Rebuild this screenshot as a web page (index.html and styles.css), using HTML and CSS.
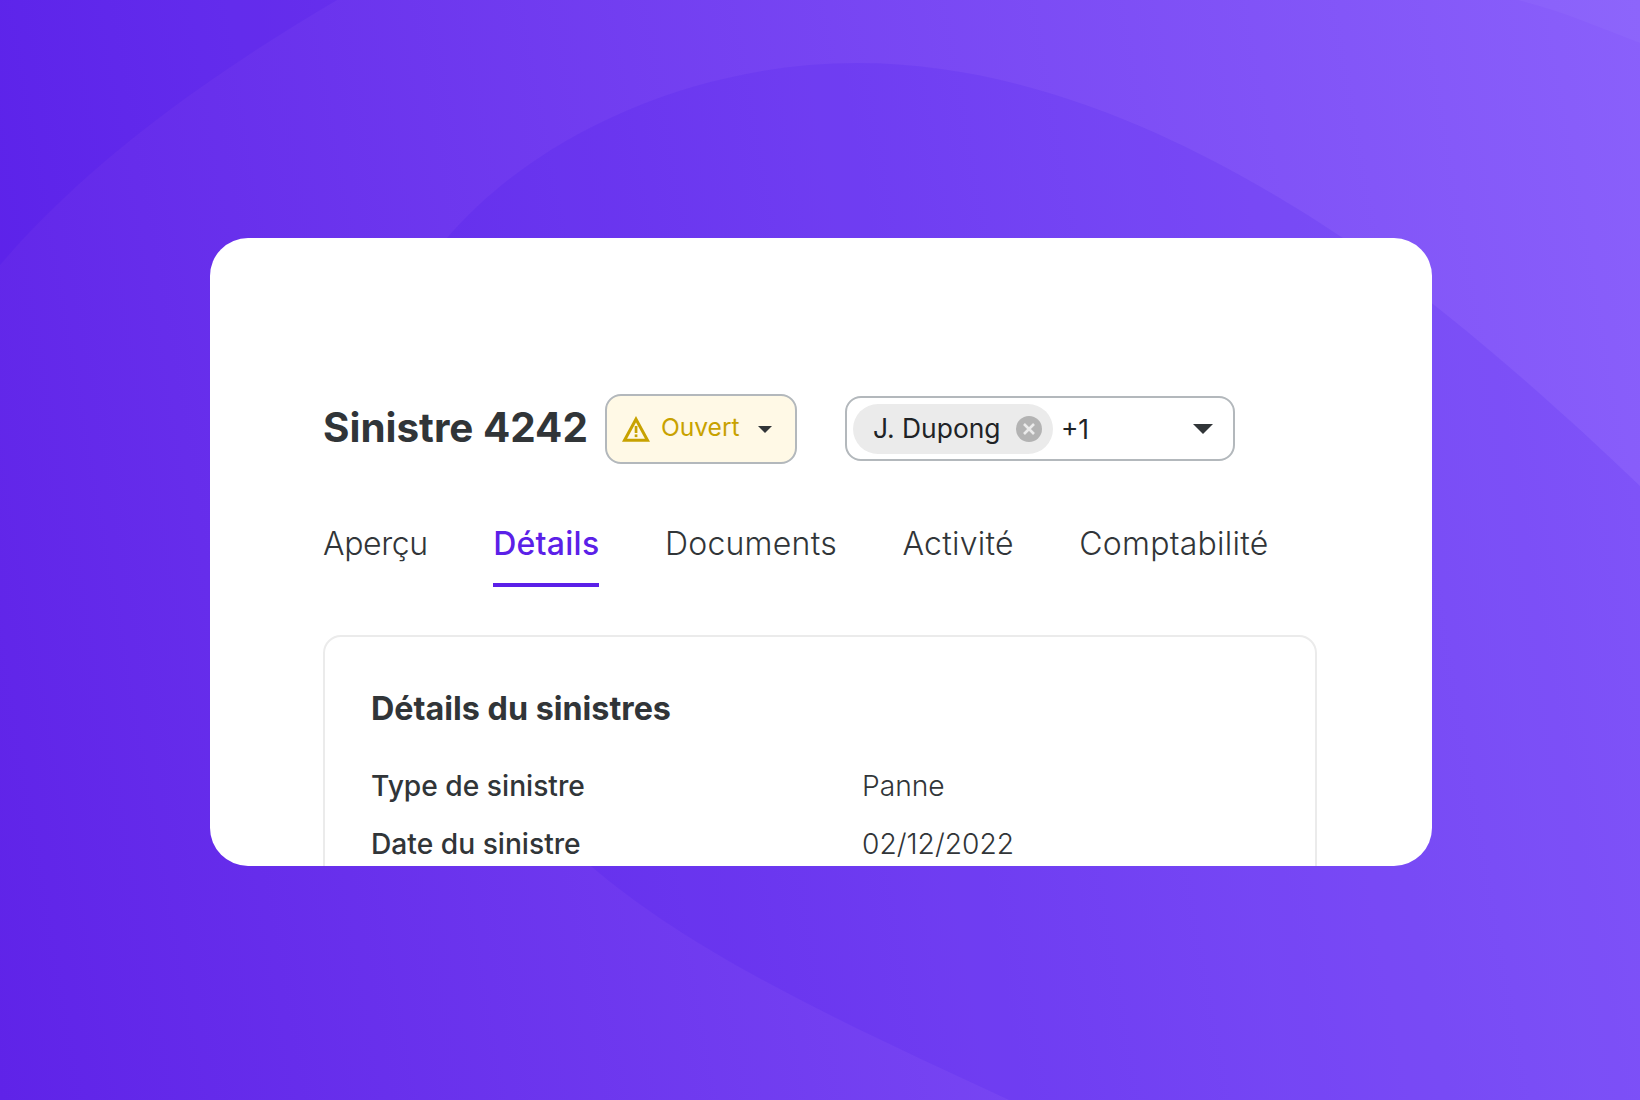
FILE: index.html
```html
<!DOCTYPE html>
<html lang="fr">
<head>
    <meta charset="UTF-8">
    <title>Sinistre 4242</title>
    <link rel="stylesheet" href="styles.css">
</head>
<body>
    <div class="page">
        <!-- Background shapes -->
        <svg class="bg-shapes" width="1640" height="1100" viewBox="0 0 1640 1100">
            <path class="shape-dark" d="M0 0H337C210 75 90 160 0 265Z"/>
            <path class="shape-dark" d="M1009 1100C870 1035 700 960 591 866C380 690 330 420 447 238C540 130 700 63 857 63C1060 63 1240 170 1343 238C1440 303 1550 400 1640 486V1100Z"/>
            <path class="shape-light" d="M1517 0C1560 10 1600 28 1640 43V0Z"/>
        </svg>

        <div class="card">
            <div class="header">
                <h1 class="title">Sinistre 4242</h1>
                <div class="status">
                    <svg class="status-icon" width="28" height="26" viewBox="0 0 28 26">
                        <path d="M14 3.2L25.5 24.3H2.5Z" fill="none" stroke="#c8a200" stroke-width="3"/>
                        <rect x="12.7" y="10" width="2.7" height="7" fill="#c8a200"/>
                        <rect x="12.7" y="18.4" width="2.7" height="2.7" fill="#c8a200"/>
                    </svg>
                    <span class="status-label">Ouvert</span>
                    <span class="caret caret-small"></span>
                </div>
                <div class="assignee">
                    <div class="chip">
                        <span class="chip-label">J. Dupong</span>
                        <svg class="chip-close" width="26" height="26" viewBox="0 0 26 26">
                            <circle cx="13" cy="13" r="13" fill="#b3b3b3"/>
                            <path d="M8 8L18 18M18 8L8 18" stroke="#ebebeb" stroke-width="2.6"/>
                        </svg>
                    </div>
                    <span class="more">+1</span>
                    <span class="caret caret-big"></span>
                </div>
            </div>

            <div class="tabs">
                <a class="tab tab-tight">Aperçu</a>
                <a class="tab tab-active">Détails</a>
                <a class="tab">Documents</a>
                <a class="tab">Activité</a>
                <a class="tab">Comptabilité</a>
            </div>

            <div class="panel">
                <h2 class="panel-title">Détails du sinistres</h2>
                <div class="row">
                    <span class="row-label">Type de sinistre</span>
                    <span class="row-value">Panne</span>
                </div>
                <div class="row">
                    <span class="row-label">Date du sinistre</span>
                    <span class="row-value">02/12/2022</span>
                </div>
            </div>
        </div>
    </div>
</body>
</html>
```

FILE: styles.css
```css
body, html {
    margin: 0;
    padding: 0;
    font-family: Inter, "Liberation Sans", sans-serif;
    color: #313538;
}

.page {
    position: relative;
    width: 1640px;
    height: 1100px;
    overflow: hidden;
    box-sizing: border-box;
    padding: 238px 0 0 210px;
    background: linear-gradient(80deg, #5f23e8 0%, #8a60fb 100%);
}

.bg-shapes {
    position: absolute;
    top: 0;
    left: 0;
}

.shape-dark {
    fill: #3000f0;
    opacity: 0.1;
}

.shape-light {
    fill: #ffffff;
    opacity: 0.03;
}

/* Card */
.card {
    position: relative;
    width: 1222px;
    height: 628px;
    box-sizing: border-box;
    padding: 156px 115px 0 113px;
    background: #fff;
    border-radius: 38px;
    overflow: hidden;
}

.header {
    display: flex;
    align-items: center;
    height: 70px;
}

.title {
    margin: 0 17px 2px 0;
    font-size: 40.4px;
    font-weight: 700;
    line-height: 48px;
}

/* Status dropdown */
.status {
    display: flex;
    align-items: center;
    box-sizing: border-box;
    width: 192px;
    height: 70px;
    margin-right: 48px;
    padding-left: 15px;
    background: #fff9e6;
    border: 2px solid #b3b8bc;
    border-radius: 16px;
}

.status-label {
    margin: 0 0 4px 11px;
    font-size: 24.6px;
    color: #c8a200;
}

.caret {
    display: block;
    width: 0;
    height: 0;
    border-style: solid;
    border-color: #313538 transparent transparent;
}

.caret-small {
    margin-left: 18px;
    border-width: 7px 7px 0;
}

.caret-big {
    margin-left: auto;
    margin-right: 20px;
    border-width: 10px 10px 0;
}

/* Assignee select */
.assignee {
    display: flex;
    align-items: center;
    box-sizing: border-box;
    width: 390px;
    height: 65px;
    margin-bottom: 1px;
    padding-left: 6px;
    background: #fff;
    border: 2px solid #b3b8bc;
    border-radius: 16px;
}

.chip {
    display: flex;
    align-items: center;
    box-sizing: border-box;
    width: 200px;
    height: 50px;
    padding-left: 20px;
    background: #ebebeb;
    border-radius: 25px;
}

.chip-label {
    margin-bottom: 1px;
    font-size: 26.4px;
    color: #202326;
}

.chip-close {
    margin-left: auto;
    margin-right: 11px;
}

.more {
    margin-left: 8px;
    font-size: 26.4px;
    color: #202326;
}

/* Tabs */
.tabs {
    display: flex;
    gap: 65.5px;
    margin-top: 60px;
}

.tab {
    padding-bottom: 20px;
    border-bottom: 4px solid transparent;
    font-size: 32px;
    font-weight: 300;
    letter-spacing: 0.25px;
    line-height: 39px;
}

.tab-tight {
    letter-spacing: -0.4px;
}

.tab-active {
    color: #5b20e8;
    font-weight: 500;
    border-bottom-color: #5b20e8;
}

/* Details panel */
.panel {
    box-sizing: border-box;
    height: 400px;
    margin-top: 48px;
    padding: 52px 46px;
    border: 2px solid #ebebeb;
    border-radius: 18px;
}

.panel-title {
    margin: 0 0 40px;
    font-size: 32.3px;
    font-weight: 700;
    line-height: 40px;
}

.row {
    display: grid;
    grid-template-columns: 491px 1fr;
    height: 58px;
    font-size: 28.2px;
    line-height: 34px;
}

.row-label {
    font-weight: 500;
}

.row-value {
    font-weight: 300;
}
```
